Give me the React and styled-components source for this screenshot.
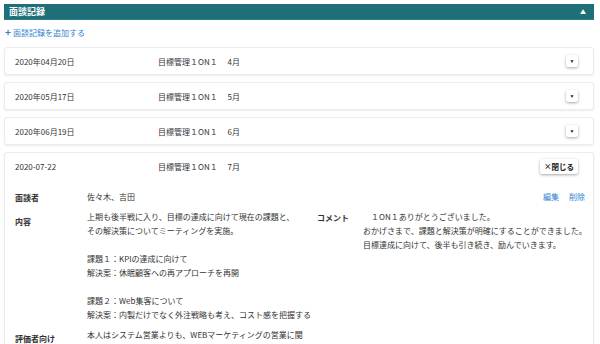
import React from "react";
import styled, { createGlobalStyle } from "styled-components";

const Global = createGlobalStyle`
  html, body { margin: 0; padding: 0; background: #fff; }
  body { font-family: "Noto Sans CJK JP", "Noto Sans", sans-serif; color: #333; }
  * { box-sizing: border-box; }
`;

const Page = styled.div`
  padding: 4px 6px 0 4px;
  width: 600px;
  height: 344px;
  overflow: hidden;
`;

const SectionBar = styled.div`
  height: 16px;
  background: #1e6f77;
  border-bottom: 1px solid #2a8088;
  display: flex;
  align-items: center;
  justify-content: space-between;
  padding: 0 8px 0 5px;
  color: #fff;
  font-size: 9px;
  font-weight: 700;
  line-height: 1;
`;

const Caret = styled.span`
  font-size: 6px;
  color: #fff;
`;

const AddLink = styled.div`
  display: flex;
  align-items: center;
  gap: 2px;
  height: 22px;
  padding: 2px 0 0 1px;
  font-size: 8px;
  color: #2f7fd1;
`;

const Plus = styled.span`
  font-size: 10px;
  font-weight: 700;
  line-height: 1;
`;

const List = styled.div`
  display: flex;
  flex-direction: column;
  gap: 7px;
  margin-top: 5px;
`;

const Card = styled.div`
  background: #fff;
  border: 1px solid #ececec;
  border-radius: 3px;
  box-shadow: 0 1px 2px rgba(0, 0, 0, 0.08);
`;

const CardHead = styled.div`
  height: 26px;
  display: flex;
  align-items: center;
  padding: 0 15px 0 10px;
  font-size: 8px;
`;

const Date = styled.span`
  width: 143px;
`;

const Title = styled.span`
  flex: 1;
  white-space: pre;
`;

const IconBtn = styled.button`
  width: 12px;
  height: 12px;
  padding: 0;
  border: none;
  border-radius: 2px;
  background: #fff;
  box-shadow: 0 1px 3px rgba(0, 0, 0, 0.35);
  display: flex;
  align-items: center;
  justify-content: center;
  font-size: 5px;
  color: #222;
`;

const CloseBtn = styled.button`
  height: 15px;
  padding: 0 4px;
  border: none;
  border-radius: 2px;
  background: #fff;
  box-shadow: 0 1px 3px rgba(0, 0, 0, 0.35);
  font-family: inherit;
  font-size: 7.5px;
  font-weight: 700;
  color: #222;
  display: flex;
  align-items: center;
`;

const Body = styled.div`
  padding: 10px 2px 0 10px;
  font-size: 8px;
  line-height: 14px;
`;

const TopRow = styled.div`
  display: flex;
  align-items: center;
  height: 15px;
`;

const Label = styled.div`
  width: ${(p) => p.$w || 72}px;
  flex-shrink: 0;
  font-weight: 700;
  padding-top: ${(p) => p.$pt || 0}px;
`;

const Value = styled.div`
  flex: 1;
  white-space: pre-line;
`;

const Links = styled.div`
  display: flex;
  gap: 10px;
  color: #2f7fd1;
  margin-left: auto;
  margin-right: 6px;
`;

const Columns = styled.div`
  display: grid;
  grid-template-columns: 302px 1fr;
  margin-top: 6px;
`;

const Field = styled.div`
  display: flex;
  align-items: flex-start;
  margin-top: ${(p) => p.$mt || 0}px;
`;

const items = [
  { d: "2020年04月20日", t: "目標管理１ON１　 4月" },
  { d: "2020年05月17日", t: "目標管理１ON１　 5月" },
  { d: "2020年06月19日", t: "目標管理１ON１　 6月" },
];

export default function App() {
  return (
    <>
      <Global />
      <Page>
        <SectionBar>
          <span>面談記録</span>
          <Caret>▲</Caret>
        </SectionBar>
        <AddLink>
          <Plus>+</Plus>
          <span>面談記録を追加する</span>
        </AddLink>
        <List>
          {items.map((it) => (
            <Card key={it.d}>
              <CardHead>
                <Date>{it.d}</Date>
                <Title>{it.t}</Title>
                <IconBtn>▼</IconBtn>
              </CardHead>
            </Card>
          ))}
          <Card>
            <CardHead>
              <Date>2020-07-22</Date>
              <Title>目標管理１ON１　 7月</Title>
              <CloseBtn>×閉じる</CloseBtn>
            </CardHead>
            <Body>
              <TopRow>
                <Label $pt={2}>面談者</Label>
                <Value>佐々木、吉田</Value>
                <Links>
                  <span>編集</span>
                  <span>削除</span>
                </Links>
              </TopRow>
              <Columns>
                <Field>
                  <Label $pt={5}>内容</Label>
                  <Value>
                    {"上期も後半戦に入り、目標の達成に向けて現在の課題と、\nその解決策についてミーティングを実施。\n\n課題１：KPIの達成に向けて\n解決案：休眠顧客への再アプローチを再開\n\n課題２：Web集客について\n解決案：内製だけでなく外注戦略も考え、コスト感を把握する"}
                  </Value>
                </Field>
                <Field>
                  <Label $w={46} $pt={1}>コメント</Label>
                  <Value>
                    {"\u3000１ON１ありがとうございました。\nおかげさまで、課題と解決策が明確にすることができました。\n目標達成に向けて、後半も引き続き、励んでいきます。"}
                  </Value>
                </Field>
              </Columns>
              <Field $mt={6}>
                <Label $pt={4}>評価者向け</Label>
                <Value>本人はシステム営業よりも、WEBマーケティングの営業に関</Value>
              </Field>
            </Body>
          </Card>
        </List>
      </Page>
    </>
  );
}
